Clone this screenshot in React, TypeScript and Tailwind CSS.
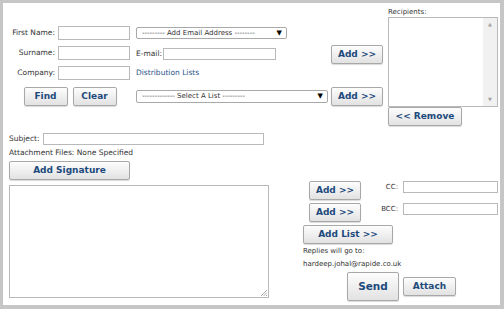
import React from "react";

const font = { fontFamily: '"DejaVu Sans", Verdana, sans-serif' };

function Btn({ children, className = "" }: { children: React.ReactNode; className?: string }) {
  return (
    <div
      className={
        "flex items-center justify-center border border-[#a8a8a8] rounded-[2px] bg-gradient-to-b from-[#fdfdfd] to-[#e2e2e2] text-[#1d4a7c] font-bold shadow-[0_1px_1px_rgba(0,0,0,0.15)] " +
        className
      }
    >
      {children}
    </div>
  );
}

function Input({ className = "" }: { className?: string }) {
  return <div className={"border border-[#b9b9b9] bg-white " + className} />;
}

function Select({ text, className = "" }: { text: string; className?: string }) {
  return (
    <div className={"flex items-center border border-[#a9a9a9] rounded-[2px] bg-white pl-[5px] pr-[4px] " + className}>
      <span className="flex-1 text-[7px] text-[#333] whitespace-nowrap">{text}</span>
      <span className="text-[7px] text-black leading-none">▼</span>
    </div>
  );
}

export default function App() {
  return (
    <div style={font} className="w-[504px] h-[309px] bg-[#c6c6c6] pt-[3px] pl-[3px] pr-[4px] pb-[4px] text-[#333]">
      <div className="w-full h-full bg-white flex flex-col pl-[6px]">
        {/* Top section */}
        <div className="flex items-start">
          <div className="mt-[23px] flex">
            {/* Col A */}
            <div className="flex flex-col w-[121px]">
              <div className="flex items-center h-[14px]">
                <span className="w-[46px] text-right text-[7.5px] whitespace-nowrap">First Name:</span>
                <Input className="ml-[3px] w-[72px] h-[14px]" />
              </div>
              <div className="flex items-center h-[14px] mt-[6px]">
                <span className="w-[46px] text-right text-[7.5px] whitespace-nowrap">Surname:</span>
                <Input className="ml-[3px] w-[72px] h-[14px]" />
              </div>
              <div className="flex items-center h-[14px] mt-[6px]">
                <span className="w-[46px] text-right text-[7.5px] whitespace-nowrap">Company:</span>
                <Input className="ml-[3px] w-[72px] h-[14px]" />
              </div>
              <div className="flex justify-center gap-[5px] mt-[7px] pl-[1px]">
                <Btn className="w-[44px] h-[19px] text-[9px]">Find</Btn>
                <Btn className="w-[44px] h-[19px] text-[9px]">Clear</Btn>
              </div>
            </div>
            {/* Col B */}
            <div className="flex flex-col ml-[6px] w-[192px]">
              <div className="flex items-center h-[14px]">
                <Select text="--------- Add Email Address --------" className="w-[151px] h-[12px]" />
              </div>
              <div className="flex items-center h-[14px] mt-[6px] pt-[2px]">
                <span className="text-[7.5px] whitespace-nowrap">E-mail:</span>
                <Input className="ml-[1px] w-[113px] h-[12px]" />
              </div>
              <div className="flex items-center h-[14px] mt-[6px]">
                <span className="text-[7.5px] text-[#2a5488] whitespace-nowrap">Distribution Lists</span>
              </div>
              <div className="flex items-center h-[19px] mt-[7px]">
                <Select text="------------- Select A List ---------" className="w-[192px] h-[13px]" />
              </div>
            </div>
          </div>
          {/* Col C */}
          <div className="flex flex-col ml-[3px] mt-[42px]">
            <Btn className="w-[52px] h-[19px] text-[9px]">Add &gt;&gt;</Btn>
            <Btn className="w-[52px] h-[19px] mt-[23px] text-[9px]">Add &gt;&gt;</Btn>
          </div>
          {/* Col D */}
          <div className="flex flex-col ml-[5px] mt-[5px]">
            <span className="text-[7px] leading-[9px] h-[9px] whitespace-nowrap">Recipients:</span>
            <div className="flex w-[110px] h-[90px] border border-[#b9b9b9] bg-white">
              <div className="flex-1" />
              <div className="w-[14px] bg-[#f1f1f1] flex flex-col items-center justify-between py-[4px]">
                <span className="text-[5px] text-[#a3a3a3] leading-none">▲</span>
                <span className="text-[5px] text-[#a3a3a3] leading-none">▼</span>
              </div>
            </div>
            <Btn className="w-[74px] h-[19px] text-[9px]">&lt;&lt; Remove</Btn>
          </div>
        </div>

        {/* Subject */}
        <div className="flex items-center mt-[7px] h-[12px]">
          <span className="text-[7.5px] whitespace-nowrap">Subject:</span>
          <Input className="ml-[3px] w-[221px] h-[12px]" />
        </div>
        <div className="text-[7.5px] mt-[3px] leading-[10px]">Attachment Files: None Specified</div>
        <Btn className="w-[121px] h-[19px] mt-[3px] text-[9px]">Add Signature</Btn>

        {/* Bottom section */}
        <div className="flex items-start mt-[1px]">
          <div className="relative w-[260px] h-[113px] mt-[4px] border border-[#b9b9b9] bg-white">
            <svg className="absolute right-[1px] bottom-[1px]" width="6" height="6" viewBox="0 0 6 6">
              <path d="M6 0 L0 6 M6 2.5 L2.5 6 M6 5 L5 6" stroke="#999" strokeWidth="0.8" />
            </svg>
          </div>
          <div className="flex flex-col ml-[34px]">
            <div className="flex items-center">
              <Btn className="ml-[6px] w-[52px] h-[19px] text-[9px]">Add &gt;&gt;</Btn>
              <span className="w-[37px] text-right text-[7px] self-start mt-[1px]">CC:</span>
              <Input className="ml-[5px] w-[95px] h-[12px] self-start" />
            </div>
            <div className="flex items-center mt-[3px]">
              <Btn className="ml-[6px] w-[52px] h-[19px] text-[9px]">Add &gt;&gt;</Btn>
              <span className="w-[37px] text-right text-[7px] self-start mt-[1px]">BCC:</span>
              <Input className="ml-[5px] w-[95px] h-[12px] self-start" />
            </div>
            <Btn className="w-[90px] h-[19px] mt-[3px] text-[9px]">Add List &gt;&gt;</Btn>
            <div className="text-[7px] leading-[13px] mt-[1px]">Replies will go to:</div>
            <div className="text-[7px] leading-[13px]">hardeep.johal@rapide.co.uk</div>
            <div className="flex items-center ml-[44px] mt-[1px]">
              <Btn className="w-[52px] h-[29px] text-[10.5px]">Send</Btn>
              <Btn className="ml-[4px] w-[53px] h-[19px] text-[9px]">Attach</Btn>
            </div>
          </div>
        </div>
      </div>
    </div>
  );
}
